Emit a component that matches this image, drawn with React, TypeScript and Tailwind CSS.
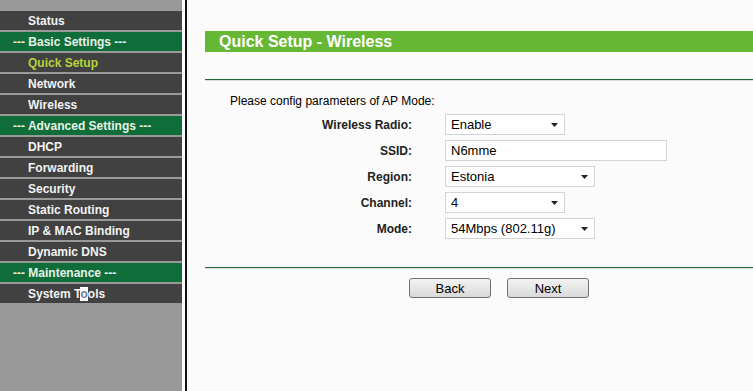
import React from "react";

const items: { label: string; kind: "item" | "head" | "active" }[] = [
  { label: "Status", kind: "item" },
  { label: "--- Basic Settings ---", kind: "head" },
  { label: "Quick Setup", kind: "active" },
  { label: "Network", kind: "item" },
  { label: "Wireless", kind: "item" },
  { label: "--- Advanced Settings ---", kind: "head" },
  { label: "DHCP", kind: "item" },
  { label: "Forwarding", kind: "item" },
  { label: "Security", kind: "item" },
  { label: "Static Routing", kind: "item" },
  { label: "IP & MAC Binding", kind: "item" },
  { label: "Dynamic DNS", kind: "item" },
  { label: "--- Maintenance ---", kind: "head" },
  { label: "System Tools", kind: "item" },
];

function Arrow() {
  return (
    <svg width="7" height="4" viewBox="0 0 7 4" className="shrink-0">
      <polygon points="0,0 7,0 3.5,4" fill="#222" />
    </svg>
  );
}

function Select({ value, width }: { value: string; width: string }) {
  return (
    <div
      className={`${width} h-[21px] flex items-center justify-between bg-white border border-[#d4d4d4] pl-[5px] pr-[6px] text-[13px] text-black`}
    >
      <span>{value}</span>
      <Arrow />
    </div>
  );
}

export default function App() {
  return (
    <div
      className="flex w-[753px] h-[391px] bg-[#fbfbfb] overflow-hidden"
      style={{ fontFamily: '"Liberation Sans", Arial, sans-serif' }}
    >
      {/* Sidebar */}
      <div className="w-[182px] h-full bg-[#999999] pt-[11px] flex flex-col gap-[2px] shrink-0">
        {items.map((it) => (
          <div
            key={it.label}
            className={`h-[19px] flex items-center text-[12px] font-bold leading-none ${
              it.kind === "head"
                ? "bg-[#0f6d3a] text-[#e6f2e6] pl-[13px]"
                : "bg-[#414141] pl-[28px] " +
                  (it.kind === "active" ? "text-[#b6d33a]" : "text-[#f2f2f2]")
            }`}
          >
            {it.label === "System Tools" ? (
              <span>
                System T<span className="bg-white text-[#6a7aa0]">o</span>ols
              </span>
            ) : (
              it.label
            )}
          </div>
        ))}
      </div>
      <div className="w-[3px] h-full bg-white shrink-0" />
      <div className="w-[2px] h-full bg-[#111] shrink-0" />

      {/* Content */}
      <div className="flex-1 pl-[18px] pt-[31px] flex flex-col">
        <div className="h-[21px] bg-[#66b834] flex items-center pl-[14px] text-white text-[16px] font-bold leading-none">
          Quick Setup - Wireless
        </div>
        <div className="mt-[27px] h-[1px] bg-[#1f6a3c]" />
        <div className="h-[1px] bg-[#dcdcdc]" />
        <div className="pl-[25px] pt-[13px] text-[12px] text-black leading-[14px]">
          Please config parameters of AP Mode:
        </div>
        <div className="mt-[6px] grid grid-cols-[207px_auto] gap-x-[33px] gap-y-[5px] items-center text-[12px]">
          <div className="text-right font-bold text-[#222]">Wireless Radio:</div>
          <Select value="Enable" width="w-[120px]" />
          <div className="text-right font-bold text-[#222]">SSID:</div>
          <div className="w-[222px] h-[21px] flex items-center bg-white border border-[#d4d4d4] pl-[5px] text-[13px] text-black">
            N6mme
          </div>
          <div className="text-right font-bold text-[#222]">Region:</div>
          <Select value="Estonia" width="w-[150px]" />
          <div className="text-right font-bold text-[#222]">Channel:</div>
          <Select value="4" width="w-[120px]" />
          <div className="text-right font-bold text-[#222]">Mode:</div>
          <Select value="54Mbps (802.11g)" width="w-[150px]" />
        </div>
        <div className="mt-[28px] h-[1px] bg-[#1f6a3c]" />
        <div className="h-[1px] bg-[#e2e2e2]" />
        <div className="flex pl-[204px] gap-[16px] mt-[9px]">
          <button className="w-[82px] h-[20px] rounded-[3px] border border-[#707070] bg-gradient-to-b from-[#f3f3f3] to-[#d9d9d9] text-[13px] text-black leading-none pt-[1px]">
            Back
          </button>
          <button className="w-[82px] h-[20px] rounded-[3px] border border-[#707070] bg-gradient-to-b from-[#f3f3f3] to-[#d9d9d9] text-[13px] text-black leading-none pt-[1px]">
            Next
          </button>
        </div>
      </div>
    </div>
  );
}
